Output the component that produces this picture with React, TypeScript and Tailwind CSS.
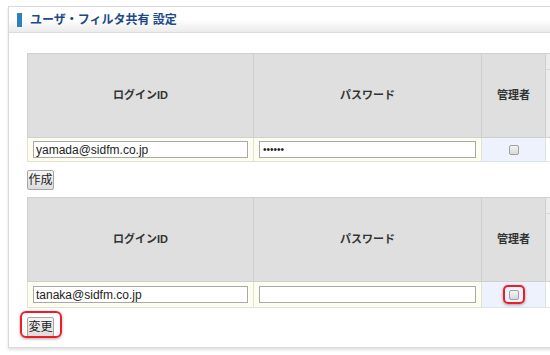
import React from "react";

const font = { fontFamily: '"Liberation Sans", "Noto Sans CJK JP", sans-serif' };

type Row = { id: string; pw: string };

function UserTable({ row, mark }: { row: Row; mark?: boolean }) {
  return (
    <table className="w-[560px] table-fixed border-collapse text-[11px] text-[#333]">
      <colgroup>
        <col className="w-[226px]" />
        <col className="w-[228px]" />
        <col className="w-[64px]" />
        <col />
      </colgroup>
      <thead>
        <tr className="h-[84px]">
          <th className="border border-[#cfcfcf] bg-[#dfdfdf] font-bold">ログインID</th>
          <th className="border border-[#cfcfcf] bg-[#dfdfdf] font-bold">パスワード</th>
          <th className="border border-[#cfcfcf] bg-[#dfdfdf] font-bold">管理者</th>
          <th className="border border-[#cfcfcf] bg-[#ececec] align-top">
            <div className="h-[16px] border-b border-[#d8d8d8]" />
          </th>
        </tr>
      </thead>
      <tbody>
        <tr className={mark ? "h-[26px]" : "h-[24px]"}>
          <td className="border border-[#e2e2d2] bg-[#fdfdf0] px-[5px]">
            <input
              readOnly
              value={row.id}
              className="block h-[17px] w-full border border-[#a9a9a9] bg-white px-[2px] text-[12px] text-[#222] outline-none"
            />
          </td>
          <td className="border border-[#e2e2d2] bg-[#fdfdf0] px-[5px]">
            <input
              readOnly
              type="password"
              value={row.pw}
              className="block h-[17px] w-full border border-[#a9a9a9] bg-white px-[3px] text-[10px] text-[#222] outline-none"
            />
          </td>
          <td className="border border-[#dde3ee] bg-[#edf2fd]">
            <div className="flex justify-center">
              <div className="relative">
                <span className="block h-[10px] w-[10px] rounded-[2px] border border-[#a0a0a0] bg-gradient-to-b from-[#f4f4f4] to-[#d8d8d8]" />
                {mark && (
                  <span className="absolute -left-[6px] -top-[5px] h-[19px] w-[22px] rounded-[5px] border-2 border-[#ee1c24] shadow-[0_1px_3px_rgba(0,0,0,0.35)]" />
                )}
              </div>
            </div>
          </td>
          <td className="border border-[#e5e5e5] bg-white" />
        </tr>
      </tbody>
    </table>
  );
}

function Btn({ label }: { label: string }) {
  return (
    <button className="h-[20px] w-[27px] rounded-[2px] border border-[#a6a6a6] bg-gradient-to-b from-[#f6f6f6] to-[#dcdcdc] text-[12px] leading-none text-[#222]">
      {label}
    </button>
  );
}

export default function App() {
  return (
    <div className="h-[355px] w-[550px] overflow-hidden bg-white pl-[8px] pt-[6px]" style={font}>
      <div className="w-[600px] border border-[#d9d9d9] bg-white shadow-[0_2px_3px_rgba(0,0,0,0.12)]">
        <div className="flex h-[26px] items-center border-b border-[#dcdcdc] bg-gradient-to-b from-white from-50% to-[#ebebeb] pl-[8px]">
          <span className="h-[14px] w-[5px] bg-[#2f7fc1]" />
          <h1 className="ml-[8px] text-[12px] font-bold text-[#1d4a86]">ユーザ・フィルタ共有 設定</h1>
        </div>
        <div className="pb-[9px] pl-[18px] pt-[20px]">
          <UserTable row={{ id: "yamada@sidfm.co.jp", pw: "aaaaaa" }} />
          <div className="mb-[6px] mt-[5px]">
            <Btn label="作成" />
          </div>
          <UserTable row={{ id: "tanaka@sidfm.co.jp", pw: "" }} mark />
          <div className="mt-[6px]">
            <div className="relative inline-block align-top">
              <Btn label="変更" />
              <span className="absolute -left-[7px] -top-[3px] h-[27px] w-[42px] rounded-[6px] border-2 border-[#ee1c24] shadow-[0_1px_3px_rgba(0,0,0,0.35)]" />
            </div>
          </div>
        </div>
      </div>
    </div>
  );
}
